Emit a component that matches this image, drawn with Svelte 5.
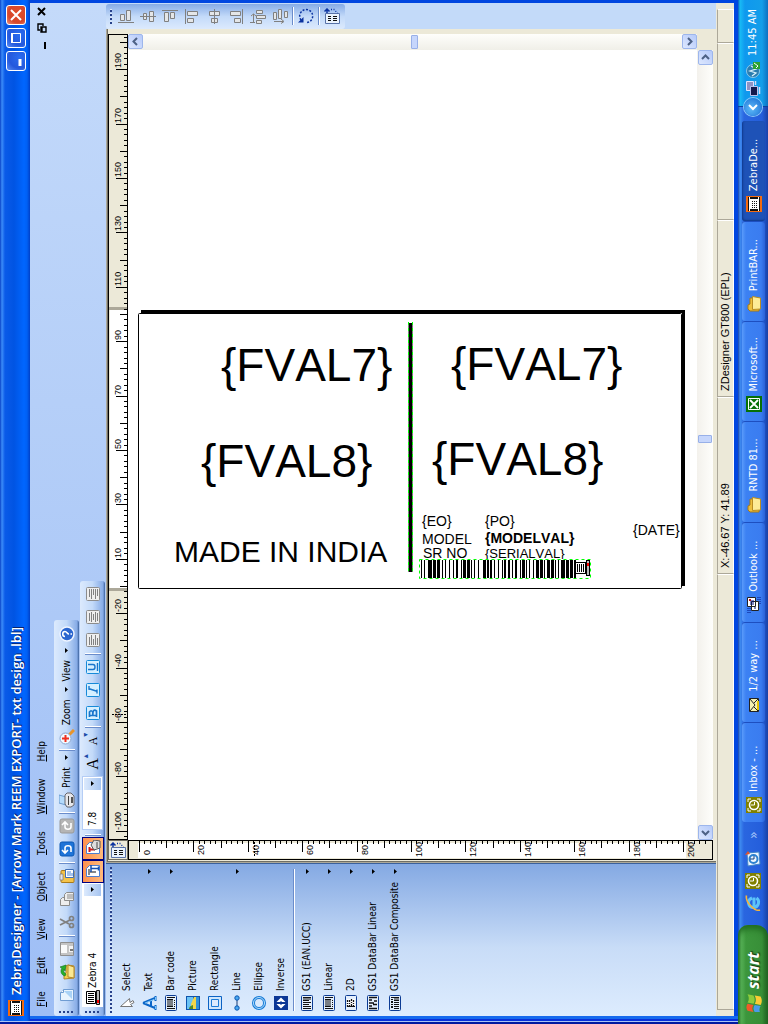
<script>
  const menus = ['File', 'Edit', 'View', 'Object', 'Tools', 'Window', 'Help'];

  const tools = [
    { name: 'Select', icon: 'select' },
    { name: 'Text', icon: 'text', more: true },
    { name: 'Bar code', icon: 'barcode', more: true },
    { name: 'Picture', icon: 'picture' },
    { name: 'Rectangle', icon: 'rectangle' },
    { name: 'Line', icon: 'line', more: true },
    { name: 'Ellipse', icon: 'ellipse' },
    { name: 'Inverse', icon: 'inverse' }
  ];
  const codes = [
    { name: 'GS1 (EAN.UCC)', icon: 'gs1' },
    { name: 'Linear', icon: 'barcode' },
    { name: '2D', icon: 'matrix' },
    { name: 'GS1 DataBar Linear', icon: 'databar' },
    { name: 'GS1 DataBar Composite', icon: 'composite' }
  ];

  const alignments = ['bottom', 'middle', 'top', 'left', 'center', 'right', 'spacey', 'spacex'];

  const tasks = [
    { name: 'Inbox - ...', icon: 'clock' },
    { name: '1/2 way ...', icon: 'mail' },
    { name: 'Outlook ...', icon: 'outlook' },
    { name: 'RNTD 81...', icon: 'folder' },
    { name: 'Microsoft...', icon: 'excel' },
    { name: 'PrintBAR...', icon: 'folder' },
    { name: 'ZebraDe...', icon: 'zebra', active: true }
  ];

  const STEP = 5.44;
  const mod10 = (k) => ((k % 10) + 10) % 10;

  const across = Array.from({ length: 150 }, (_, i) => i - 46).map((k) => ({
    at: Math.round(252 + k * STEP),
    size: mod10(k) === 5 ? 12 : mod10(k) === 0 ? 8 : 4,
    text: mod10(k) === 5 ? (k > 0 ? 10 + (k - 5) * 2 : -20 + (k + 5) * 2) : null
  }));

  const down = Array.from({ length: 105 }, (_, k) => ({
    at: Math.round(10 + k * STEP),
    size: k % 10 === 0 ? 12 : k % 5 === 0 ? 8 : 4,
    text: k % 10 === 0 ? k * 2 : null
  }));

  const runs =
    '1 2 1 3 4 1 3 1 3 2 1 2 1 3 1 3 1 2 2 3 1 1 3 1 3 1 1 2 1 3 1 4 3 1 2 1 2 2 1 3 1 3 1 1 2 2 2 2 1 2 2 3 1 1 3 1 1 2 1 3 1 2 3 1 3 1 1 2 3 1 3 1 1 2 1 2 4 1 3 1 3 1 2'
      .split(' ')
      .map(Number);
  const bars = [];
  runs.reduce((x, w, i) => {
    if (i % 2 === 0) bars.push({ x, w });
    return x + w;
  }, 282);
</script>

{#snippet frame()}
  <rect x=".5" y="2.500" width="15" height="11" rx="1" fill="#e4effc" stroke="#0c3c94" />
{/snippet}

{#snippet icon(name)}
  <svg class="icon" viewBox="0 0 16 16" aria-hidden="true">
    {#if name === 'zebra'}
      <path d="M0 0h16v16H0z" fill="#f36a10" />
      <path d="M1 2h14v12H1z" fill="#111" />
      <path d="M1 3.500h14M1 12.500h14" stroke="#fff" />
      <path d="M3 4h10v8H3z" fill="#fff" />
      <path d="M4 6.500h8M4 8.500h8M4 10.500h8" stroke="#111" stroke-dasharray="1 1" />
    {:else if name === 'printer'}
      <path d="M2.500 1.500h12v9h-12z" fill="#fff" stroke="#000" />
      <path d="M4.500 3v6M6.500 3v6M8.500 3v6M10.500 3v6M12.500 3v6" stroke="#000" />
      <path d="M1.500 11.500h14v3h-14z" fill="#bbb" stroke="#111" />
      <path d="M3 13h3" stroke="#f00" stroke-width="2" />
    {:else if name === 'new'}
      <path d="M2.500 1.500h8l3 3v10h-11z" fill="#e9f4fe" stroke="#6f9cd2" />
      <path d="M4 13l8-8v8z" fill="#a9d2f6" />
      <path d="M10.500 1.500v3h3" fill="#fff" stroke="#6f9cd2" />
    {:else if name === 'open'}
      <path d="M1 5h5l1 2h7l1 2-1 6H2z" fill="#f2cf4c" stroke="#b3872a" />
      <path d="M3 9h12l-2 6H2z" fill="#fbe992" stroke="#b3872a" />
      <path d="M4 6c1-4 5-5 8-3l1-2 2 6-6-1 2-1c-2-1-4 0-5 2z" fill="#25b12a" stroke="#147018" stroke-width=".6" />
    {:else if name === 'save'}
      <path d="M1.500 1.500h13v13h-13z" fill="#c4c4c4" stroke="#8f8f8f" />
      <path d="M4 2h8v6H4z" fill="#fafafa" /><path d="M5 10h6v4H5z" fill="#f2f2f2" />
      <path d="M6 11h2v3H6z" fill="#777" />
    {:else if name === 'cut'}
      <g fill="none" stroke="#808080" stroke-width="1.700">
        <path d="M5 1l5 10M11 1L6 10" /><circle cx="4.500" cy="12.500" r="2" /><circle cx="11.500" cy="12.500" r="2" />
      </g>
    {:else if name === 'copy'}
      <g fill="#eee" stroke="#8c8c8c">
        <path d="M1.500 1.500h6l2 2v7h-8z" /><path d="M6.500 5.500h6l2 2v7h-8z" /><path d="M8 9h5M8 11h5M8 13h5" />
      </g>
    {:else if name === 'paste'}
      <rect x="1.500" y="2" width="12" height="13" rx="1" fill="#f4c34a" stroke="#a87a1c" />
      <path d="M4 1h6v3H4z" fill="#e3e6ee" stroke="#777" stroke-width=".7" />
      <path d="M6.500 6.500h8v8h-8z" fill="#fff" stroke="#3f6eb5" /><path d="M8 9h5M8 11h5M8 13h3" stroke="#4b86d8" />
    {:else if name === 'undo' || name === 'redo'}
      <g class:flip={name === 'redo'}>
        <rect x="1" y="1" width="14" height="14" rx="2" fill={name === 'undo' ? '#1f74d8' : '#b5b5b5'} stroke={name === 'undo' ? '#0b57b5' : '#999'} />
        <path d="M5 12h4c3 0 3-6 0-6H5M7 3L4 6l3 3" fill="none" stroke="#fff" stroke-width="1.600" />
      </g>
    {:else if name === 'print'}
      <path d="M5 0h8l-2 7H3z" fill="#b4dafb" stroke="#6c9bd0" />
      <path d="M1 8l3-2h9l2 2v4l-3 3H3l-2-3z" fill="#e6e6ea" stroke="#66666e" />
      <path d="M3 9.500h9" stroke="#444" /><path d="M5 13h6" stroke="#222" stroke-width="1.500" />
    {:else if name === 'zoom'}
      <path d="M10 10l5 5" stroke="#e8952b" stroke-width="3" />
      <circle cx="6.500" cy="6.500" r="5.500" fill="#f2f9ff" stroke="#8aa6cf" />
      <path d="M6.500 3v7M3 6.500h7" stroke="#f03020" stroke-width="2" />
    {:else if name === 'help'}
      <circle cx="8" cy="8" r="7" fill="#2c66cf" stroke="#eef4ff" stroke-width="1.500" />
      <path d="M5.500 6c0-3 5-3 5 0 0 2-2.500 2-2.500 4M8 11.500v1.500" fill="none" stroke="#fff" stroke-width="1.600" />
    {:else if name === 'page' || name === 'tag'}
      <path d="M2.500 1.500h8l3 3v10h-11z" fill="#fff" stroke="#4e7fd0" />
      {#if name === 'page'}
        <path d="M4 4h6M7 4v7" stroke="#888" stroke-width="2" /><path d="M7 6h7M10.500 6v8M8.500 13.500h4" stroke="#1750b0" stroke-width="1.500" />
      {:else}
        <path d="M4 4.500h5M6.500 4v6" stroke="#d01818" stroke-width="2" /><path d="M6 9l5-3 5 3-1 6H8z" fill="#ddd" stroke="#555" /><path d="M8 12h6" stroke="#444" />
      {/if}
    {:else if name === 'bold' || name === 'italic' || name === 'under'}
      <rect x="1.500" y="1.500" width="13" height="13" rx="1" fill="#d5efff" stroke="#168ad8" />
      {#if name === 'bold'}
        <path d="M5.500 4v8M4 4.500h5q2.500 1.500 0 3.300H6q7 0 4 3.700H4" fill="none" stroke="#1976cc" stroke-width="1.700" />
      {:else if name === 'italic'}
        <path d="M9.500 3.500l-3 9M8 4h4M4.500 12h4" stroke="#1976cc" stroke-width="1.400" />
      {:else}
        <path d="M5.500 3v5q0 2 2.500 2t2.500-2V3M4 12.500h8" fill="none" stroke="#1976cc" stroke-width="1.400" />
      {/if}
    {:else if name === 'jleft' || name === 'jcenter' || name === 'jright'}
      <rect x="1.500" y="1.500" width="13" height="13" rx="1" fill="#eee" stroke="#8c8c8c" />
      <path d={name === 'jleft' ? 'M3 4.500h8M3 6.500h10M3 8.500h6M3 10.500h10M3 12.500h7' : name === 'jcenter' ? 'M4 4.500h8M3 6.500h10M5 8.500h6M3 10.500h10M4 12.500h8' : 'M5 4.500h8M3 6.500h10M7 8.500h6M3 10.500h10M6 12.500h7'} stroke="#808080" />
    {:else if name === 'select'}
      <path d="M4.500 1.500l8 9-4 .5 2 3-2 1-2-3.500-2 2z" fill="#fff" stroke="#777" />
    {:else if name === 'text'}
      <path d="M8 2L3 14M8 2l5 12M5 10h6M1 14.500h5M10 14.500h5" fill="none" stroke="#0b66c8" stroke-width="2" />
      <path d="M8 4l3.500 9M2 14.500h3M11 14.500h3" stroke="#7cc6fa" />
    {:else if name === 'barcode'}
      {@render frame()}
      <path d="M2.500 4v8M4.500 4v6M6 4v6M8 4v6M10 4v6M11.500 4v6M13.500 4v8" stroke="#111" /><path d="M4 11.500h8" stroke="#111" stroke-dasharray="1 1" />
    {:else if name === 'gs1'}
      {@render frame()}
      <path d="M2.500 4v8M4.500 4v8M6.500 4v6M8.500 4v8M10.500 4v6M12 4v8M13.500 4v8" stroke="#111" />
    {:else if name === 'matrix'}
      {@render frame()}
      <path d="M4 4h8v8H4z" fill="#fff" /><path d="M4 4.500h8M4 6.500h8M5 8.500h7M4 10.500h8" stroke="#111" stroke-width="1.300" stroke-dasharray="2 1 1 1" /><path d="M4.500 4v8" stroke="#111" />
    {:else if name === 'databar'}
      {@render frame()}
      <path d="M2.500 4v8M5 4v3M6.500 8v4M8 4v5M10 9v3M11 4v3M13.500 4v8" stroke="#111" stroke-width="1.400" />
    {:else if name === 'composite'}
      {@render frame()}
      <path d="M2.500 7v5M4.500 7v5M6.500 7v5M8.500 7v5M10.500 7v5M12 7v5M13.500 4v8" stroke="#111" /><path d="M3 5h9" stroke="#111" stroke-width="2" stroke-dasharray="2 1 1 1" />
    {:else if name === 'picture'}
      <path d="M1 1h14v14H1z" fill="#0d54ad" /><path d="M2 2h12v6H2z" fill="#6bc3f5" />
      <path d="M2 6h5l7 3v2H2z" fill="#f2d64c" /><path d="M2 4q3 0 4 4H2z" fill="#4d8b2c" /><path d="M2 11h12v3H2z" fill="#2f92dc" />
    {:else if name === 'rectangle'}
      <path d="M1.500 1.500h13v13h-13z" fill="#cfe6fc" stroke="#0b62c4" /><path d="M4.500 4.500h7v7h-7z" fill="#dcebfd" stroke="#1b7ad6" />
    {:else if name === 'line'}
      <path d="M3 8h10" stroke="#1b3c74" /><circle cx="3" cy="8" r="2.200" fill="#4aa8f0" stroke="#0b56b0" /><circle cx="13" cy="8" r="2.200" fill="#4aa8f0" stroke="#0b56b0" />
    {:else if name === 'ellipse'}
      <circle cx="8" cy="8" r="5.500" fill="none" stroke="#1479d6" stroke-width="3" /><circle cx="8" cy="8" r="5.500" fill="none" stroke="#b4dffd" />
    {:else if name === 'inverse'}
      <path d="M1 1h14v14H1z" fill="#0b3796" />
      <path d="M2.500 8L7 3.500V7h-.500v2H7v3.500zM13.500 8L9 3.500V7h.500v2H9v3.500z" fill="#fff" />
    {:else if name === 'clock'}
      <path d="M0 0h16v16H0z" fill="#808000" /><circle cx="8" cy="8" r="4.500" fill="none" stroke="#fff" stroke-width="1.600" />
      <path d="M8 5v3.500h3" fill="none" stroke="#fff" /><path d="M2 5V2h3M11 2h3v3M14 11v3h-3M5 14H2v-3" fill="none" stroke="#fff" />
    {:else if name === 'mail'}
      <path d="M1.500 3.500h13v9h-13z" fill="#f6f2b0" stroke="#222" /><path d="M2 4l6 5 6-5M2 12l4-4M14 12l-4-4" fill="none" stroke="#222" /><path d="M3 12h9" stroke="#e5c200" stroke-width="2" />
    {:else if name === 'outlook'}
      <path d="M0 2h6M0 4h6M9 12h7M9 14h7" stroke="#001080" stroke-dasharray="1 1" />
      <path d="M2.500 5.500h9v7h-9zM6.500 1.500h9v8h-9z" fill="#fff" stroke="#222" /><path d="M8 5h5M8 7h5M4 9h2" stroke="#001080" /><path d="M12 3h2v2h-2z" fill="#c01010" />
    {:else if name === 'folder'}
      <path d="M1 4l2-2h4l1 2h6v9H1z" fill="#edbe3c" stroke="#a77a17" /><path d="M2.500 6.500h13l-1.500 8H3z" fill="#fdeb96" stroke="#b98d22" />
    {:else if name === 'excel'}
      <path d="M0 0h16v16H0z" fill="#067006" /><path d="M2.500 2.500h11v11h-11z" fill="none" stroke="#fff" /><path d="M4 4l8 8M12 4l-8 8" stroke="#fff" stroke-width="1.800" />
    {:else if name === 'ie'}
      <path d="M13.500 9H5M13 7C11 1.500 3.500 3 3.500 8.500s7 6.500 9.500 3" fill="none" stroke="#5cc4fa" stroke-width="3" />
      <path d="M1 15C-1 10 9 0 15.500 1.500" fill="none" stroke="#f5b43c" stroke-width="1.600" />
    {:else if name === 'express'}
      <path d="M1 3l13-1 1 12-12 1z" fill="#eaf5ff" stroke="#4386c8" /><circle cx="8" cy="8.500" r="4" fill="none" stroke="#2b80d0" stroke-width="2" /><path d="M8 5v4h3" fill="none" stroke="#123e7c" /><path d="M12 0l4 3-3 2z" fill="#e2562a" />
    {:else if name === 'windows'}
      <path d="M1 3q3-2 6 0L6 8q-3-2-6 0z" fill="#f1592a" /><path d="M8 3q3 2 7 0l-1 5q-4 2-7 0z" fill="#8ccc3c" />
      <path d="M0 9q3-2 6 0l-1 5q-3-2-6 0z" fill="#4a9be8" /><path d="M7 9q3 2 7 0l-1 5q-4 2-7 0z" fill="#fbcb34" />
    {:else if name === 'network'}
      <path d="M5.500 1.500h9v7h-9z" fill="#8f93c4" stroke="#dfe4ff" /><path d="M.5 5.500h9v7h-9z" fill="#141a4c" stroke="#b9c2ee" /><path d="M2 14.500h7M11 10.500h4" stroke="#d5dbf5" stroke-width="1.500" />
    {:else if name === 'shield'}
      <circle cx="7" cy="8" r="6.500" fill="#2a7cae" stroke="#bfe0ee" stroke-width=".7" /><path d="M2 7l3 4 2-6 2 6 3-5" fill="none" stroke="#d6f0fa" stroke-width="1.300" />
      <path d="M9 8h7v7H9z" fill="#2ca236" /><path d="M10 11l2 2 3-4" fill="none" stroke="#fff" />
    {:else if name === 'rotate'}
      <g transform="matrix(0 1 -1 0 16 0)"><path d="M3 12A6.500 6.500 0 1 1 9 14.500" fill="none" stroke="#0a32a0" stroke-width="1.500" stroke-dasharray="2 1.500" /><path d="M0 14.500h5.500V9z" fill="#0a32a0" /></g>
    {:else if name === 'origin'}
      <g transform="matrix(0 1 -1 0 16 0)"><path d="M1.500 5.500h14v10h-14z" fill="#eaf3fd" stroke="#5872a8" /><path d="M4 8.500h3M4 10.500h3M4 12.500h3M9 8.500h4M9 10.500h4M9 12.500h4" stroke="#111" /><path d="M3 5V1M.5 3.500L3 1l2.500 2.500" fill="none" stroke="#0a32a0" stroke-width="1.500" /><path d="M7 1.500h4M11.500 3l2 2" stroke="#0a32a0" stroke-width="1.300" stroke-dasharray="1 1.500" /></g>
    {:else}
      <g transform="matrix(0 1 -1 0 16 0)" fill="#e4e6e8" stroke="#808080">
        {#if name === 'bottom'}<path d="M0 14.500h16M2.500 6.500h4v6h-4zM8.500 2.500h4v10h-4z" />
        {:else if name === 'middle'}<path d="M0 8.500h16M3.500 5.500h3v6h-3zM9.500 3.500h4v10h-4z" />
        {:else if name === 'top'}<path d="M0 2.500h16M2.500 4.500h4v9h-4zM8.500 4.500h4v6h-4z" />
        {:else if name === 'left'}<path d="M1.500 1v15M3.500 3.500h10v4h-10zM3.500 10.500h6v4h-6z" />
        {:else if name === 'center'}<path d="M8.500 1v15M3.500 3.500h10v4h-10zM5.500 10.500h6v4h-6z" />
        {:else if name === 'right'}<path d="M14.500 1v15M2.500 3.500h10v4h-10zM6.500 10.500h6v4h-6z" />
        {:else if name === 'spacey'}<path d="M3.500 6v8M1 8l2.500-2L6 8M6.500 2.500h6v3h-6zM6.500 7.500h9v3h-9zM6.500 12.500h5v3h-5zM0 14.500h5" />
        {:else}<path d="M1.500 4.500h3v7h-3zM6.500 1.500h3v9h-3zM12.500 3.500h3v6h-3zM2 13.500h9M9 11l3 2.500-3 2" />{/if}
      </g>
    {/if}
  </svg>
{/snippet}

{#snippet sep()}<span class="sep"></span>{/snippet}
{#snippet caret()}<svg class="caret" viewBox="0 0 5 3" aria-hidden="true"><path d="M0 0h5L2.500 3z" /></svg>{/snippet}

{#snippet toolList(items)}
  <ul>
    {#each items as tool}
      <li>
        <button type="button" class="tool">
          {@render icon(tool.icon)}<span>{tool.name}</span>
          {#if tool.more || items === codes}{@render caret()}{/if}
        </button>
      </li>
    {/each}
  </ul>
{/snippet}

<div class="view">
  <div class="desktop">
    <main class="window">
      <header class="title">
        {@render icon('zebra')}
        <h1>ZebraDesigner - [Arrow Mark REEM EXPORT- txt design .lbl]</h1>
        <button type="button" class="win" aria-label="Minimize"><svg viewBox="0 0 18 18"><path d="M4 13h7" stroke="#fff" stroke-width="3" /></svg></button>
        <button type="button" class="win" aria-label="Restore"><svg viewBox="0 0 18 18"><path d="M4.500 4.500h9v9h-9z" fill="none" stroke="#fff" /><path d="M4 5h10" stroke="#fff" stroke-width="2" /></svg></button>
        <button type="button" class="win close" aria-label="Close"><svg viewBox="0 0 18 18"><path d="M4 4l10 10M14 4L4 14" stroke="#fff" stroke-width="2" /></svg></button>
      </header>

      <div class="chrome">
        <nav class="menu">
          {#each menus as item}
            <button type="button"><u>{item[0]}</u>{item.slice(1)}</button>
          {/each}
          <span class="mdi">
            <button type="button" aria-label="Minimize document"><svg viewBox="0 0 10 10"><path d="M1 8h7" stroke="#000" stroke-width="2" /></svg></button>
            <button type="button" aria-label="Restore document"><svg viewBox="0 0 10 10"><path d="M3 3V1h6v5H7M1 4h5v5H1zM1 5h5" fill="none" stroke="#000" stroke-width="1.400" /></svg></button>
            <button type="button" aria-label="Close document"><svg viewBox="0 0 10 10"><path d="M1 1l7 7M8 1L1 8" stroke="#000" stroke-width="2" /></svg></button>
          </span>
        </nav>

        <div class="bar">
          <span class="grip"></span>
          <button type="button" aria-label="New">{@render icon('new')}</button>
          <button type="button" aria-label="Open">{@render icon('open')}</button>
          <button type="button" aria-label="Save">{@render icon('save')}</button>
          {@render sep()}
          <button type="button" aria-label="Cut">{@render icon('cut')}</button>
          <button type="button" aria-label="Copy">{@render icon('copy')}</button>
          <button type="button" aria-label="Paste">{@render icon('paste')}</button>
          {@render sep()}
          <button type="button" aria-label="Undo">{@render icon('undo')}</button>
          <button type="button" aria-label="Redo">{@render icon('redo')}</button>
          {@render sep()}
          <button type="button" class="wide">{@render icon('print')}Print{@render caret()}</button>
          {@render sep()}
          <button type="button" class="wide">{@render icon('zoom')}Zoom{@render caret()}</button>
          <button type="button" class="wide">View{@render caret()}</button>
          <button type="button" aria-label="Help">{@render icon('help')}</button>
        </div>

        <div class="bar">
          <span class="grip"></span>
          <div class="combo font">
            {@render icon('printer')}
            <select aria-label="Font"><option>Zebra 4</option></select>
            <span class="drop">{@render caret()}</span>
          </div>
          <button type="button" class="on" aria-label="Printer fonts">{@render icon('page')}</button>
          <button type="button" class="on" aria-label="Windows fonts">{@render icon('tag')}</button>
          {@render sep()}
          <div class="combo size">
            <select aria-label="Font size"><option>7.8</option></select>
            <span class="drop">{@render caret()}</span>
          </div>
          <button type="button" class="grow" aria-label="Increase font">A<sup>▴</sup></button>
          <button type="button" class="grow less" aria-label="Decrease font">A<sup>▾</sup></button>
          {@render sep()}
          <button type="button" aria-label="Bold">{@render icon('bold')}</button>
          <button type="button" aria-label="Italic">{@render icon('italic')}</button>
          <button type="button" aria-label="Underline">{@render icon('under')}</button>
          {@render sep()}
          <button type="button" aria-label="Align left">{@render icon('jleft')}</button>
          <button type="button" aria-label="Align center">{@render icon('jcenter')}</button>
          <button type="button" aria-label="Align right">{@render icon('jright')}</button>
        </div>
      </div>

      <div class="work">
        <aside class="toolbox">
          <span class="grip flat"></span>
          {@render toolList(tools)}
          <hr />
          {@render toolList(codes)}
        </aside>

        <section class="doc">
          <button type="button" class="corner" aria-label="Ruler origin">{@render icon('origin')}</button>
          <svg class="ruler top">
            <rect x="250" y="1" width="280" height="18" fill="#fff" />
            <path d="M249.500 0v19M530.500 0v19" class="edge" />
            {#each across as t}
              <path d="M{t.at}.5 {19 - t.size}v{t.size}" />
              {#if t.text !== null}<text x={t.at + 2} y="12">{t.text}</text>{/if}
            {/each}
            <path d="M124.500 3v16" stroke-dasharray="2 1" />
          </svg>
          <svg class="ruler side">
            <rect x="1" y="9" width="15" height="548" fill="#fff" />
            {#each down as t}
              <path d="M{19 - t.size} {t.at}.5h{t.size}" />
              {#if t.text !== null}<text x={t.text > 99 ? 2 : 4} y={t.at + 11}>{t.text}</text>{/if}
            {/each}
            <path d="M3 125.500h16" stroke-dasharray="2 1" />
          </svg>
          <div class="canvas">
            <svg class="label" viewBox="0 0 548 282">
              <path d="M2 1.500h544" stroke="#000" stroke-width="3" />
              <path d="M544.500 1v275" stroke="#000" stroke-width="3" />
              <rect x="-.5" y="3.500" width="543" height="275" rx="1" fill="none" stroke="#000" />
              <g class="big">
                <text x="82" y="71">&#123;FVAL7&#125;</text>
                <text x="312" y="70">&#123;FVAL7&#125;</text>
                <text x="62" y="167">&#123;FVAL8&#125;</text>
                <text x="293" y="165">&#123;FVAL8&#125;</text>
              </g>
              <text class="mid" x="35" y="252">MADE IN INDIA</text>
              <path d="M271.500 13v249" stroke="#000" stroke-width="4" />
              <path d="M269.500 12v250M273.500 12v250" class="pick" />
              <g class="small">
                <text x="283" y="216">&#123;EO&#125;</text>
                <text x="346" y="216">&#123;PO&#125;</text>
                <text x="283" y="234">MODEL</text>
                <text x="346" y="233" font-weight="bold">&#123;MODELVAL&#125;</text>
                <text x="284" y="248">SR NO</text>
                <text class="serial" x="346" y="248">&#123;SERIALVAL&#125;</text>
                <text x="494" y="225">&#123;DATE&#125;</text>
              </g>
              <path d="M281 249h171v20H281z" fill="#fff" />
              {#each bars as b}<rect x={b.x} y="250" width={b.w} height="18" />{/each}
              <rect x="436.500" y="252.500" width="10" height="11" fill="#fff" stroke="#000" />
              <path d="M438.500 254v8M440.500 254v8M442.500 254v8M444.500 254v8" stroke="#000" />
              <rect x="447.500" y="250.500" width="3" height="15" fill="#bbb" stroke="#000" />
              <path d="M449 253v3" stroke="#f00" stroke-width="2" />
              <rect x="280.500" y="249.500" width="171" height="19" class="pick" />
            </svg>
          </div>
          <div class="scroll upright">
            <button type="button" aria-label="Scroll up"><svg viewBox="0 0 9 9"><path d="M1 6l3.500-3.500L8 6" /></svg></button>
            <i></i>
            <button type="button" aria-label="Scroll down"><svg viewBox="0 0 9 9"><path d="M1 3l3.500 3.500L8 3" /></svg></button>
          </div>
          <div class="scroll level">
            <button type="button" aria-label="Scroll left"><svg viewBox="0 0 9 9"><path d="M6 1L2.500 4.500 6 8" /></svg></button>
            <i></i>
            <button type="button" aria-label="Scroll right"><svg viewBox="0 0 9 9"><path d="M3 1l3.500 3.500L3 8" /></svg></button>
          </div>
        </section>

        <div class="dock">
          <div class="bar tall">
            <span class="grip flat"></span>
            {#each alignments as a}<button type="button" aria-label={a}>{@render icon(a)}</button>{/each}
            <span class="sep flat"></span>
            <button type="button" aria-label="Rotate">{@render icon('rotate')}</button>
            <span class="sep flat"></span>
            <button type="button" aria-label="Origin">{@render icon('origin')}</button>
          </div>
        </div>
      </div>

      <footer class="status">
        <span></span><span>X:-46.67 Y: 41.89</span><span>ZDesigner GT800 (EPL)</span><span></span><span></span>
      </footer>
    </main>

    <nav class="taskbar">
      <button type="button" class="start">{@render icon('windows')}start</button>
      <div class="quick">
        <button type="button" aria-label="Internet Explorer">{@render icon('ie')}</button>
        <button type="button" aria-label="Calendar">{@render icon('clock')}</button>
        <button type="button" aria-label="Outlook Express">{@render icon('express')}</button>
        <button type="button" class="more">»</button>
      </div>
      <div class="tasks">
        {#each tasks as task}
          <button type="button" class:active={task.active}>{@render icon(task.icon)}{task.name}</button>
        {/each}
      </div>
      <div class="tray">
        <button type="button" class="hide" aria-label="Show hidden icons"><svg viewBox="0 0 18 18"><path d="M11 5L7 9l4 4" fill="none" stroke="#fff" stroke-width="2" /></svg></button>
        {@render icon('network')}
        {@render icon('shield')}
        <time>11:45 AM</time>
      </div>
    </nav>
  </div>
</div>

<style>
  :global(body) { margin: 0; overflow: hidden; }
  .view { width: 100vw; height: 100vh; overflow: hidden; }
  .desktop {
    display: flex; flex-direction: column;
    width: 100vh; height: 100vw;
    transform-origin: 0 0;
    transform: translateY(100vh) rotate(-90deg);
    font: 10px/16px "DejaVu Sans Condensed", "DejaVu Sans", sans-serif;
    color: #000;
    background: #0831d9;
  }
  .desktop * { box-sizing: border-box; }
  button { font: inherit; color: inherit; background: none; border: 0; padding: 0; margin: 0; display: flex; align-items: center; justify-content: center; white-space: nowrap; }
  svg { display: block; flex: none; }
  .icon { width: 16px; height: 16px; }
  .caret { width: 5px; height: 3px; }
  .flip { transform: scaleX(-1); transform-origin: 8px 8px; }

  .window { flex: 1; min-height: 0; display: flex; flex-direction: column; background: linear-gradient(90deg, #0019a0 2px, #a9c4f5 2px 3px, #0831d9 3px 5px, #166aee 5px 8px, #0046e0 8px); padding: 0 3px 4px 8px; }
  .title {
    height: 30px; margin: 0 -3px 0 -5px; padding: 2px 5px 0 5px; display: flex; align-items: center; gap: 3px; flex: none;
    background: linear-gradient(#0842c8, #3c8cf8 2px, #0a5ae8 5px, #0054e3 14px, #0066ff 24px, #0060f4 27px, #0040c8);
  }
  h1 { flex: 1; margin: 0 0 0 2px; font: 600 13px/20px "Open Sans", "Noto Sans", sans-serif; color: #fff; text-shadow: 1px 1px #0a246a; white-space: nowrap; }
  .win { width: 20px; height: 20px; border: 1px solid #fff; border-radius: 3px; background: radial-gradient(circle at 70% 70%, #2a6cf0, #2458dc 60%, #5b8ff5); }
  .win svg { width: 18px; height: 18px; }
  .close { background: radial-gradient(circle at 60% 60%, #e0502c, #d6462a 60%, #ee9078); }

  .chrome { flex: none; height: 76px; background: linear-gradient(90deg, #9ebef5, #c4dafa); }
  .menu { display: flex; align-items: center; height: 24px; padding: 0 3px 0 7px; }
  .menu > button { padding: 0 8px 0 9px; }
  .menu > button:first-child { padding-left: 2px; }
  .mdi { margin-left: auto; display: flex; gap: 7px; }
  .mdi svg { width: 10px; height: 10px; }

  .bar { display: flex; align-items: center; width: max-content; height: 25px; margin-bottom: 1px; padding: 0 2px 0 3px; border-radius: 3px; background: linear-gradient(#dceafd, #c3daf9 50%, #86abe6 92%, #3b619c); }
  .bar > button { width: 23px; height: 22px; }
  .bar > .wide { width: auto; gap: 4px; padding: 0 3px; }
  .bar > .wide .caret { margin-left: 3px; }
  .grip { display: block; width: 2px; height: 16px; margin-right: 4px; background: repeating-linear-gradient(#27418a 0 2px, transparent 2px 4px); }
  .grip.flat { width: auto; height: 2px; margin: 4px 3px; background: repeating-linear-gradient(90deg, #27418a 0 2px, #dce9fb 2px 3px, transparent 3px 4px); }
  .sep { width: 2px; height: 16px; margin: 0 1px; background: linear-gradient(90deg, #6a8ccb 1px, #fff 1px); }
  .sep.flat { width: 18px; height: 2px; margin: 1px 0; background: linear-gradient(#6a8ccb 1px, #fff 1px); }
  .combo { display: flex; align-items: center; height: 21px; background: #fff; padding: 1px; }
  .combo select { flex: 1; min-width: 0; border: 0; padding: 0 2px; background: none; font: inherit; color: #000; appearance: none; }
  .font { width: 124px; }
  .size { width: 54px; margin: 0 1px 0 3px; border: 1px solid #b5cdf5; }
  .drop { width: 12px; height: 17px; display: grid; place-items: center; background: linear-gradient(#dceafd, #a6c4f0); }
  .bar > .on { height: 22px; border: 1px solid #000080; background: linear-gradient(#fe914e, #ffba7c); }
  .bar > .grow { font: 16px/20px "Liberation Serif", serif; width: 26px; }
  .bar > .less { font-size: 12px; width: 20px; }
  .grow sup { font: 8px/8px "DejaVu Sans", sans-serif; color: #1c4ba8; align-self: flex-start; }

  .work { flex: 1; min-height: 0; display: flex; }
  .toolbox { flex: none; width: 153px; border-right: 1px solid #3b619c; background: linear-gradient(90deg, #ddecfe, #c8dcf7 45%, #84a9e3); overflow: hidden; }
  .toolbox ul { list-style: none; margin: 0; padding: 0; }
  .toolbox .grip { margin-bottom: 4px; }
  .tool { width: 100%; height: 22px; justify-content: flex-start; gap: 4px; padding: 0 5px; }
  .tool .caret { margin-left: auto; }
  .toolbox hr { height: 2px; border: 0; margin: 1px 5px; background: linear-gradient(#6a8ccb 1px, #fff 1px); }

  .doc { flex: 1; min-width: 0; display: grid; grid-template: 20px 1fr 16px / 20px 1fr 16px; padding: 2px 5px 3px 3px; background: #ece9d8; box-shadow: inset 1px 1px #aca899, inset 2px 2px #716f64; }
  .corner { border: 1px solid #716f64; background: #ece9d8; }
  .ruler { width: 100%; height: 100%; background: #ece9d8; border: 1px solid #000; stroke: #000; overflow: hidden; }
  .top { grid-column: 2 / 4; }
  .side { grid-column: 1; grid-row: 2 / 4; }
  .ruler rect { stroke: none; }
  .ruler .edge { stroke: #aca899; stroke-width: 3; }
  .ruler text { font: 9px "Liberation Sans", Arial, sans-serif; stroke: none; }
  .canvas { position: relative; overflow: hidden; background: #fff; }
  .label { position: absolute; left: 530px; top: 11px; width: 548px; height: 282px; overflow: visible; transform-origin: 0 0; transform: rotate(90deg); font-family: "Liberation Sans", Arial, sans-serif; font-kerning: none; }
  .big { font-size: 46px; }
  .mid { font-size: 30px; }
  .small { font-size: 14px; }
  .small .serial { font-size: 13px; }
  .pick { fill: none; stroke: #0f0; stroke-dasharray: 3 3; }
  .scroll { display: flex; align-items: center; justify-content: space-between; }
  .upright { flex-direction: column; background: linear-gradient(90deg, #f0efe8, #fefefb); }
  .level { grid-column: 2; grid-row: 3; background: linear-gradient(#f3f1ec, #fefefb); }
  .scroll button { width: 15px; height: 15px; border: 1px solid #9db6ec; border-radius: 2px; background: linear-gradient(135deg, #dde7fe, #b5cafa); }
  .scroll svg { width: 9px; height: 9px; fill: none; stroke: #4d6185; stroke-width: 2; }
  .scroll i { width: 14px; height: 7px; margin-top: 4px; border: 1px solid #98b0e8; border-radius: 1px; background: #c6d6fc; }
  .level i { width: 8px; height: 14px; margin: 0 0 0 12px; }

  .dock { flex: none; width: 26px; background: #c3daf9; }
  .tall { flex-direction: column; width: 25px; height: auto; padding: 0 0 2px; background: linear-gradient(90deg, #dceafd, #c3daf9 50%, #86abe6); }
  .tall > .grip { width: 16px; margin-bottom: 3px; }
  .tall > button { width: 22px; height: 22px; }

  .status { flex: none; height: 18px; display: grid; grid-template-columns: 1fr 177px 177px 177px 34px; padding: 1px 6px; background: #ece9d8; font: 11px/15px "Liberation Sans", Arial, sans-serif; }
  .status span { padding: 0 5px; border: 1px solid; border-color: #aca899 #fff #fff #aca899; white-space: nowrap; }

  .taskbar { flex: none; height: 30px; display: flex; color: #fff; font-size: 11px; background: linear-gradient(#1941a5, #3f8cf0 2px, #2a66e0 6px, #245edb 24px, #1941a5); }
  .start { width: 99px; justify-content: flex-start; gap: 4px; padding-left: 12px; border-radius: 0 10px 12px 0; font: italic bold 16px/26px "Open Sans", sans-serif; text-shadow: 1px 1px 1px #123c12; background: linear-gradient(#2a6a2a, #5cb85c 3px, #3c963c 8px, #388f38 24px, #226022); box-shadow: inset -4px 0 6px #1f6a1f; }
  .start .icon { width: 19px; height: 19px; }
  .quick { width: 103px; padding-left: 14px; display: flex; align-items: center; gap: 6px; }
  .quick .more { margin-left: 6px; font-size: 14px; color: #a8c8fa; }
  .tasks { flex: 1; min-width: 0; display: flex; padding: 4px 14px 3px 0; }
  .tasks button { flex: 1; min-width: 0; justify-content: flex-start; gap: 5px; padding-left: 9px; border-radius: 3px; background: linear-gradient(#5a9bfa, #3c81f3 4px, #3a7cf0 19px, #2a62d8); box-shadow: inset -1px 0 #1d4fc0; }
  .tasks .active { background: #1e52b7; box-shadow: inset 1px 1px 2px #103a8c; }
  .tray { width: 107px; display: flex; align-items: center; gap: 2px; border-left: 1px solid #0a3fa0; background: linear-gradient(#0c59b9, #18bbf5 2px, #0f98ee 7px, #139ee9 24px, #0d70c0); }
  .hide { width: 18px; height: 18px; margin-left: -10px; border-radius: 9px; background: radial-gradient(circle at 40% 40%, #5cb8f8, #1468d0); box-shadow: 0 0 0 1px #8cc8f8; }
  .hide svg { width: 18px; height: 18px; }
  .tray time { margin-left: 4px; white-space: nowrap; }
</style>
